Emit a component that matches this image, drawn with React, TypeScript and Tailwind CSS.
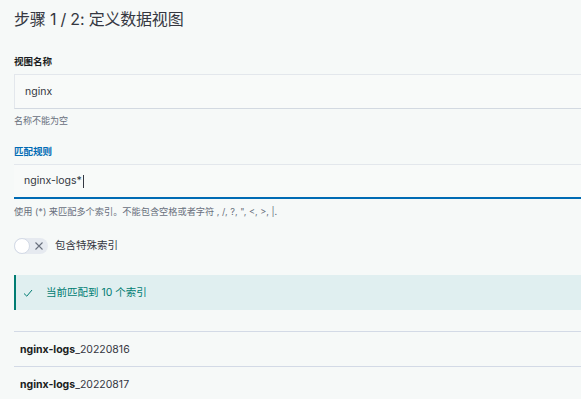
import React from "react";

const font = { fontFamily: '"Inter", "Noto Sans CJK SC", sans-serif' };

export default function App() {
  return (
    <div className="w-[581px] h-[399px] overflow-hidden bg-[#f6f9f8] text-[#343741]" style={font}>
      <div className="w-[800px] pl-[14px]">
        <h1 className="h-[38px] pt-[9px] text-[16px] leading-[20px] font-normal tracking-[-0.2px] text-[#343741]">步骤 1 / 2: 定义数据视图</h1>

        <div className="mt-[18px] text-[9.5px] leading-[12px] font-bold text-[#1a1c21]">视图名称</div>
        <div className="mt-[6px] h-[35px] flex items-center pl-[10px] bg-[#f8faf9] border border-[#e3e7ec] border-b-[#d3d9e1] text-[10.5px]">nginx</div>
        <div className="mt-[6px] text-[9px] leading-[12px] text-[#69707d]">名称不能为空</div>

        <div className="mt-[19px] text-[9.5px] leading-[12px] font-bold text-[#006bb4]">匹配规则</div>
        <div className="mt-[6px] h-[35px] flex items-center pl-[10px] bg-[#f8faf9] border-t border-[#e3e7ec] border-b-2 border-b-[#006bb4] text-[10.5px]">
          nginx-logs*<span className="inline-block w-px h-[13px] bg-[#343741] ml-px" />
        </div>
        <div className="mt-[7px] text-[9.2px] leading-[12px] text-[#69707d]">使用 (*) 来匹配多个索引。不能包含空格或者字符 , /, ?, ", &lt;, &gt;, |.</div>

        <div className="mt-[20px] flex items-center gap-[7px]">
          <div className="relative w-[34px] h-[16px] rounded-full bg-[#e6eaf0]">
            <div className="absolute left-0 top-0 w-[16px] h-[16px] rounded-full bg-white border border-[#d3dae6]" />
            <svg className="absolute left-[20px] top-[3px]" width="10" height="10" viewBox="0 0 10 10">
              <path d="M1.5 1.5 L8.5 8.5 M8.5 1.5 L1.5 8.5" stroke="#69707d" strokeWidth="1.1" fill="none" />
            </svg>
          </div>
          <span className="text-[10.5px] leading-[14px] text-[#343741]">包含特殊索引</span>
        </div>

        <div className="mt-[21px] h-[35px] flex items-center bg-[#e0eff0] border-l-2 border-[#017d73] text-[#017d73]">
          <svg className="ml-[7px]" width="10" height="10" viewBox="0 0 10 10">
            <path d="M1 5.5 L3.8 8.2 L9 2" stroke="#017d73" strokeWidth="1" fill="none" />
          </svg>
          <span className="ml-[13px] text-[10.5px]">当前匹配到 10 个索引</span>
        </div>

        <div className="mt-[21px] border-t border-[#d3dae6]">
          <div className="h-[35px] flex items-center pl-[6px] pt-[2px] text-[10.5px] border-b border-[#d3dae6]">
            <span className="font-bold text-[#1a1c21]">nginx-logs</span>
            <span>_20220816</span>
          </div>
          <div className="h-[35px] flex items-center pl-[6px] pt-[2px] text-[10.5px] border-b border-[#d3dae6]">
            <span className="font-bold text-[#1a1c21]">nginx-logs</span>
            <span>_20220817</span>
          </div>
        </div>
      </div>
    </div>
  );
}
